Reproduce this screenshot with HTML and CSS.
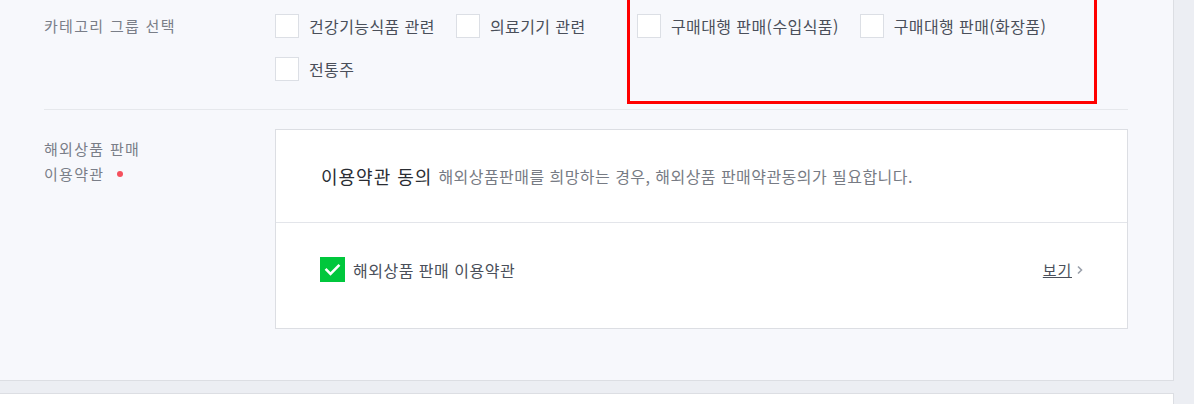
FILE: index.html
```html
<!DOCTYPE html>
<html lang="ko">
<head>
<meta charset="utf-8">
<link rel="stylesheet" href="styles.css">
</head>
<body>
<div class="panel">
  <div class="row row-cat">
    <div class="label">카테고리 그룹 선택</div>
    <div class="checks">
      <label class="item"><span class="box"></span><span class="txt">건강기능식품 관련</span></label>
      <label class="item"><span class="box"></span><span class="txt">의료기기 관련</span></label>
      <label class="item"><span class="box"></span><span class="txt">구매대행 판매(수입식품)</span></label>
      <label class="item"><span class="box"></span><span class="txt">구매대행 판매(화장품)</span></label>
      <label class="item"><span class="box"></span><span class="txt">전통주</span></label>
    </div>
  </div>
  <div class="row row-terms">
    <div class="label label-2">해외상품 판매<br>이용약관 <span class="dot"></span></div>
    <div class="terms">
      <div class="terms-head"><span class="title">이용약관 동의</span> <span class="desc">해외상품판매를 희망하는 경우, 해외상품 판매약관동의가 필요합니다.</span></div>
      <div class="terms-body">
        <div class="agree">
          <span class="gbox"><svg width="25" height="25" viewBox="0 0 25 25"><path d="M6.5 12.8l4 4 8-8" fill="none" stroke="#fff" stroke-width="2.6" stroke-linecap="square"/></svg></span>
          <span class="agree-txt">해외상품 판매 이용약관</span>
        </div>
        <a class="view"><span class="view-txt">보기</span><svg width="8" height="10" viewBox="0 0 8 10"><path d="M2 1.5l3.5 3.5-3.5 3.5" fill="none" stroke="#9aa0ab" stroke-width="1.6"/></svg></a>
      </div>
    </div>
  </div>
  <div class="mark"></div>
</div>
<div class="panel2"></div>
</body>
</html>
```
FILE: styles.css
```css
* { box-sizing: border-box; }
html, body { margin: 0; padding: 0; }
body {
  background: #eceef3;
  font-family: "Noto Sans CJK KR", "Noto Sans", sans-serif;
  overflow: hidden;
  height: 404px;
}
.panel {
  position: relative;
  width: 1174px;
  background: #f7f8fc;
  border-right: 1px solid #dcdee3;
  border-bottom: 1px solid #dcdee3;
  padding: 0 45px 51px 44px;
}
.row { display: flex; }
.label {
  width: 231px;
  flex: none;
  font-size: 15px;
  letter-spacing: 1.3px;
  color: #7a7e88;
}
.row-cat {
  padding: 14px 0 28px;
  border-bottom: 1px solid #e6e8ec;
}
.row-cat .label { line-height: 24px; }
.checks {
  flex: 1;
  display: flex;
  flex-wrap: wrap;
  row-gap: 19px;
}
.item {
  display: flex;
  align-items: center;
  min-width: 160px;
  margin-right: 21px;
  height: 24px;
}
.box {
  width: 24px;
  height: 24px;
  background: #fff;
  border: 1px solid #dcdfe5;
  flex: none;
}
.txt {
  margin-left: 10px;
  font-size: 16px;
  letter-spacing: 0.4px;
  color: #4a4f5a;
  white-space: nowrap;
}
.row-terms { padding-top: 19px; }
.label-2 { line-height: 25px; padding-top: 7px; }
.dot {
  display: inline-block;
  width: 6px;
  height: 6px;
  border-radius: 50%;
  background: #f5505d;
  margin-left: 7px;
  vertical-align: 3px;
}
.terms {
  flex: 1;
  background: #fff;
  border: 1px solid #dcdee3;
}
.terms-head {
  height: 93px;
  border-bottom: 1px solid #e3e5ea;
  display: flex;
  align-items: center;
  padding-left: 45px;
  gap: 6px;
}
.title { font-size: 18px; letter-spacing: 1px; color: #2a2d33; }
.desc { font-size: 16px; letter-spacing: 0.45px; color: #777b84; }
.terms-body {
  height: 105px;
  display: flex;
  align-items: flex-start;
  justify-content: space-between;
  padding: 34px 43px 0 44px;
}
.agree { display: flex; align-items: center; gap: 8px; }
.gbox {
  width: 25px;
  height: 25px;
  background: #00c73c;
  display: block;
}
.gbox svg { display: block; }
.agree-txt { font-size: 16px; letter-spacing: 0.5px; color: #4a4f5a; }
.view {
  font-size: 15px;
  letter-spacing: 0.8px;
  color: #4a4f5a;
  display: flex;
  align-items: center;
  gap: 4px;
  margin-top: 2px;
}
.view-txt { text-decoration: underline; }
.mark {
  position: absolute;
  left: 627px;
  top: -20px;
  width: 470px;
  height: 124px;
  border: 3px solid #ff0000;
}
.panel2 {
  margin-top: 12px;
  width: 1174px;
  height: 11px;
  background: #fff;
  border-top: 1px solid #dcdee3;
  border-right: 1px solid #dcdee3;
}
```
